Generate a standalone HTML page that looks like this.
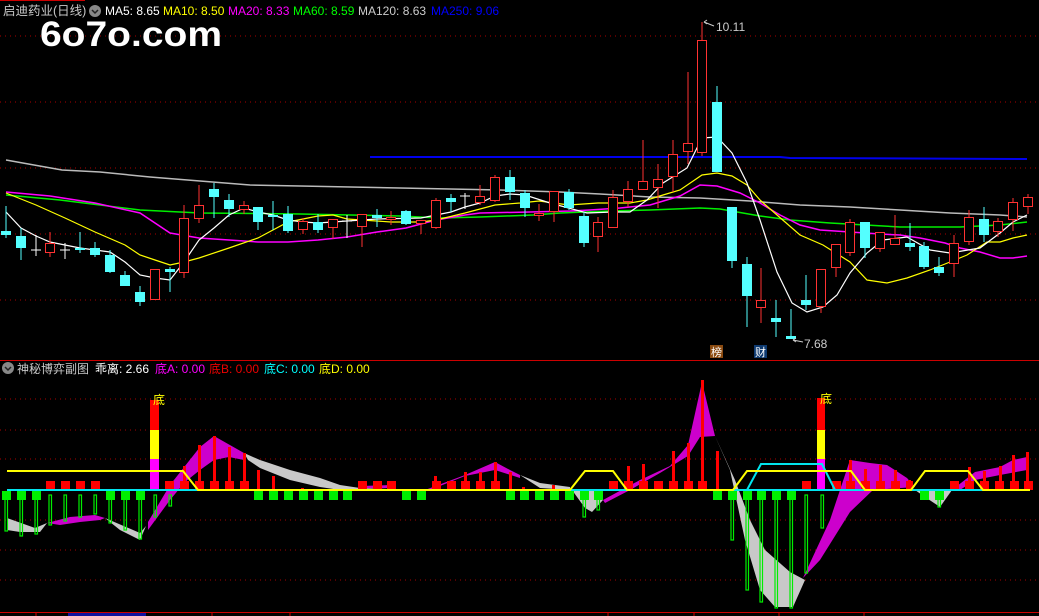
<!DOCTYPE html>
<html><head><meta charset="utf-8"><style>
html,body{margin:0;padding:0;background:#000;width:1039px;height:616px;overflow:hidden}
svg{display:block}
text{font-family:"Liberation Sans","Noto Sans CJK SC",sans-serif}
</style></head><body>
<svg width="1039" height="616" viewBox="0 0 1039 616" xmlns="http://www.w3.org/2000/svg">
<rect width="1039" height="616" fill="#000"/>
<line x1="0" y1="0.5" x2="85" y2="0.5" stroke="#c00" stroke-width="1"/>
<!-- top grid -->
<g stroke="#a00" stroke-dasharray="1,4" stroke-width="1">
<line x1="0" y1="36" x2="1039" y2="36"/><line x1="0" y1="102" x2="1039" y2="102"/>
<line x1="0" y1="168" x2="1039" y2="168"/><line x1="0" y1="234" x2="1039" y2="234"/>
<line x1="0" y1="300" x2="1039" y2="300"/>
<line x1="0" y1="399" x2="1039" y2="399"/><line x1="0" y1="430" x2="1039" y2="430"/>
<line x1="0" y1="459" x2="1039" y2="459"/><line x1="0" y1="520" x2="1039" y2="520"/>
<line x1="0" y1="550" x2="1039" y2="550"/><line x1="0" y1="580" x2="1039" y2="580"/>
</g>
<!-- header -->
<text x="3" y="15" font-size="12.5" fill="#c8c8c8">启迪药业(日线)</text>
<circle cx="95" cy="11" r="6" fill="#888"/><path d="M92 10 L95 13 L98 10" stroke="#222" stroke-width="1.5" fill="none"/>
<text x="105" y="15" font-size="12" fill="#fff">MA5: 8.65</text>
<text x="163" y="15" font-size="12" fill="#ff0">MA10: 8.50</text>
<text x="228" y="15" font-size="12" fill="#f0f">MA20: 8.33</text>
<text x="293" y="15" font-size="12" fill="#0f0">MA60: 8.59</text>
<text x="358" y="15" font-size="12" fill="#ccc">MA120: 8.63</text>
<text x="431" y="15" font-size="12" fill="#00f">MA250: 9.06</text>
<text x="40" y="46" font-size="35" font-weight="bold" fill="#fff" textLength="182" lengthAdjust="spacingAndGlyphs">6o7o.com</text>

<!-- MA lines -->
<polyline fill="none" stroke="#0000ee" stroke-width="2" points="370,157 780,157 790,158 1027,159"/>
<polyline fill="none" stroke="#bbb" stroke-width="1.5" points="6,160 62,170 100,172 150,177 200,181 250,185 300,186 400,188 500,190 560,192 600,194 650,197 700,198 750,201 800,205 850,207 900,210 950,213 1000,215 1027,217"/>
<polyline fill="none" stroke="#00ee00" stroke-width="1.5" points="6,195 60,200 140,210 200,213 300,214 400,216 440,218 480,217 533,215 560,213 610,211 650,210 700,208 720,209 760,216 790,220 830,223 900,227 960,227 1000,225 1027,222"/>
<polyline fill="none" stroke="#f0f" stroke-width="1.5" points="6,192 50,196 95,203 140,213 170,233 199,238 229,240 258,242 288,242 318,240 347,237 377,232 406,228 436,220 465,215 480,213 530,212 570,211 590,210 620,208 650,205 680,196 700,185 717,186 740,193 760,203 780,215 800,225 820,230 850,232 880,234 900,235 920,238 945,243 960,248 980,252 1000,258 1013,258 1027,256"/>
<polyline fill="none" stroke="#ff0" stroke-width="1.2" points="6,193 36,205 65,218 95,232 125,245 140,255 155,260 170,265 184,262 199,258 229,248 258,238 288,222 318,216 333,215 347,219 391,222 421,222 436,220 465,213 495,205 520,203 539,201 569,205 598,203 630,203 647,200 663,195 680,190 702,175 717,173 732,176 747,185 760,200 777,215 800,235 823,245 850,262 867,280 887,283 907,278 930,270 950,262 967,255 987,242 1000,242 1013,238 1027,235"/>
<polyline fill="none" stroke="#fff" stroke-width="1.2" points="6,212 21,228 36,236 50,242 65,245 80,248 95,250 110,252 125,262 140,275 155,278 170,280 184,262 199,240 214,228 229,215 244,208 258,212 273,215 288,220 303,222 318,223 347,221 377,219 421,218 436,215 451,212 465,207 480,203 495,196 510,194 525,195 550,203 587,213 613,212 630,212 647,200 663,183 687,168 702,138 717,137 732,153 747,183 760,220 777,272 792,303 807,312 823,307 837,295 850,273 867,253 883,240 907,237 930,250 950,253 980,248 1000,233 1013,222 1027,215"/>

<!-- candles: wicks -->
<g stroke-width="1">
<g stroke="#54ffff">
<line x1="6" y1="206" x2="6" y2="238"/><line x1="21" y1="228" x2="21" y2="260"/><line x1="80" y1="232" x2="80" y2="253"/><line x1="95" y1="242" x2="95" y2="257"/><line x1="110" y1="250" x2="110" y2="273"/><line x1="125" y1="271" x2="125" y2="286"/><line x1="140" y1="286" x2="140" y2="306"/><line x1="170" y1="267" x2="170" y2="292"/><line x1="214" y1="183" x2="214" y2="218"/><line x1="229" y1="194" x2="229" y2="217"/><line x1="258" y1="207" x2="258" y2="230"/><line x1="273" y1="201" x2="273" y2="230"/><line x1="288" y1="206" x2="288" y2="233"/><line x1="318" y1="214" x2="318" y2="233"/><line x1="377" y1="209" x2="377" y2="227"/><line x1="406" y1="210" x2="406" y2="225"/><line x1="451" y1="194" x2="451" y2="212"/><line x1="510" y1="170" x2="510" y2="200"/><line x1="525" y1="190" x2="525" y2="217"/><line x1="569" y1="189" x2="569" y2="210"/><line x1="584" y1="212" x2="584" y2="247"/><line x1="717" y1="86" x2="717" y2="172"/><line x1="732" y1="207" x2="732" y2="268"/><line x1="747" y1="257" x2="747" y2="327"/><line x1="776" y1="300" x2="776" y2="337"/><line x1="791" y1="309" x2="791" y2="338"/><line x1="806" y1="275" x2="806" y2="310"/><line x1="865" y1="222" x2="865" y2="258"/><line x1="910" y1="223" x2="910" y2="251"/><line x1="924" y1="242" x2="924" y2="269"/><line x1="939" y1="257" x2="939" y2="276"/><line x1="984" y1="207" x2="984" y2="242"/>
</g>
<g stroke="#ff3232">
<line x1="50" y1="232" x2="50" y2="257"/><line x1="155" y1="269" x2="155" y2="300"/><line x1="184" y1="205" x2="184" y2="278"/><line x1="199" y1="185" x2="199" y2="223"/><line x1="244" y1="201" x2="244" y2="214"/><line x1="303" y1="218" x2="303" y2="234"/><line x1="333" y1="219" x2="333" y2="239"/><line x1="362" y1="214" x2="362" y2="247"/><line x1="391" y1="211" x2="391" y2="225"/><line x1="421" y1="220" x2="421" y2="234"/><line x1="436" y1="198" x2="436" y2="229"/><line x1="480" y1="185" x2="480" y2="205"/><line x1="495" y1="175" x2="495" y2="202"/><line x1="539" y1="204" x2="539" y2="221"/><line x1="554" y1="191" x2="554" y2="222"/><line x1="598" y1="217" x2="598" y2="252"/><line x1="613" y1="190" x2="613" y2="227"/><line x1="628" y1="181" x2="628" y2="207"/><line x1="643" y1="140" x2="643" y2="190"/><line x1="658" y1="164" x2="658" y2="208"/><line x1="673" y1="140" x2="673" y2="192"/><line x1="688" y1="72" x2="688" y2="164"/><line x1="702" y1="22" x2="702" y2="156"/><line x1="761" y1="268" x2="761" y2="323"/><line x1="821" y1="269" x2="821" y2="313"/><line x1="836" y1="244" x2="836" y2="277"/><line x1="850" y1="219" x2="850" y2="256"/><line x1="880" y1="232" x2="880" y2="252"/><line x1="895" y1="215" x2="895" y2="244"/><line x1="954" y1="235" x2="954" y2="277"/><line x1="969" y1="210" x2="969" y2="245"/><line x1="998" y1="218" x2="998" y2="237"/><line x1="1013" y1="198" x2="1013" y2="231"/><line x1="1028" y1="194" x2="1028" y2="214"/>
</g>
<g stroke="#fff">
<line x1="36" y1="235" x2="36" y2="256"/><line x1="31" y1="250" x2="41" y2="250"/>
<line x1="65" y1="243" x2="65" y2="259"/><line x1="60" y1="250" x2="70" y2="250"/>
<line x1="347" y1="215" x2="347" y2="238"/><line x1="342" y1="221" x2="352" y2="221"/>
<line x1="465" y1="193" x2="465" y2="209"/><line x1="460" y1="196" x2="470" y2="196"/>
</g>
</g>
<!-- cyan bodies -->
<g fill="#54ffff">
<rect x="1" y="231" width="10" height="4"/><rect x="16" y="236" width="10" height="12"/><rect x="75" y="248" width="10" height="2"/><rect x="90" y="248" width="10" height="7"/><rect x="105" y="255" width="10" height="17"/><rect x="120" y="275" width="10" height="11"/><rect x="135" y="292" width="10" height="10"/><rect x="165" y="269" width="10" height="3"/><rect x="209" y="189" width="10" height="8"/><rect x="224" y="200" width="10" height="9"/><rect x="253" y="207" width="10" height="15"/><rect x="268" y="215" width="10" height="2"/><rect x="283" y="214" width="10" height="17"/><rect x="313" y="222" width="10" height="8"/><rect x="372" y="215" width="10" height="3"/><rect x="401" y="211" width="10" height="13"/><rect x="446" y="198" width="10" height="4"/><rect x="505" y="177" width="10" height="15"/><rect x="520" y="193" width="10" height="15"/><rect x="564" y="192" width="10" height="16"/><rect x="579" y="216" width="10" height="27"/><rect x="712" y="102" width="10" height="70"/><rect x="727" y="207" width="10" height="54"/><rect x="742" y="264" width="10" height="32"/><rect x="771" y="318" width="10" height="4"/><rect x="786" y="336" width="10" height="3"/><rect x="801" y="300" width="10" height="5"/><rect x="860" y="222" width="10" height="26"/><rect x="905" y="243" width="10" height="4"/><rect x="919" y="246" width="10" height="21"/><rect x="934" y="267" width="10" height="6"/><rect x="979" y="219" width="10" height="16"/>
</g>
<!-- red bodies -->
<g fill="#000" stroke="#ff3232" stroke-width="1">
<rect x="45.5" y="243.5" width="9" height="9"/><rect x="150.5" y="269.5" width="9" height="30"/><rect x="179.5" y="218.5" width="9" height="54"/><rect x="194.5" y="205.5" width="9" height="13"/><rect x="239.5" y="205.5" width="9" height="4"/><rect x="298.5" y="221.5" width="9" height="8"/><rect x="328.5" y="219.5" width="9" height="8"/><rect x="357.5" y="214.5" width="9" height="12"/><rect x="386.5" y="217.5" width="9" height="2"/><rect x="416.5" y="220.5" width="9" height="3"/><rect x="431.5" y="200.5" width="9" height="27"/><rect x="475.5" y="196.5" width="9" height="6"/><rect x="490.5" y="177.5" width="9" height="23"/><rect x="534.5" y="213.5" width="9" height="2"/><rect x="549.5" y="191.5" width="9" height="20"/><rect x="593.5" y="222.5" width="9" height="14"/><rect x="608.5" y="197.5" width="9" height="30"/><rect x="623.5" y="189.5" width="9" height="12"/><rect x="638.5" y="181.5" width="9" height="8"/><rect x="653.5" y="179.5" width="9" height="8"/><rect x="668.5" y="154.5" width="9" height="22"/><rect x="683.5" y="143.5" width="9" height="8"/><rect x="697.5" y="40.5" width="9" height="112"/><rect x="756.5" y="300.5" width="9" height="7"/><rect x="816.5" y="269.5" width="9" height="37"/><rect x="831.5" y="244.5" width="9" height="23"/><rect x="845.5" y="222.5" width="9" height="30"/><rect x="875.5" y="232.5" width="9" height="16"/><rect x="890.5" y="238.5" width="9" height="6"/><rect x="949.5" y="243.5" width="9" height="20"/><rect x="964.5" y="217.5" width="9" height="24"/><rect x="993.5" y="221.5" width="9" height="10"/><rect x="1008.5" y="202.5" width="9" height="17"/><rect x="1023.5" y="197.5" width="9" height="9"/>
</g>
<!-- labels -->
<path d="M704 22 L714 26" stroke="#ccc" fill="none"/><path d="M704 22 l3 -2 M704 22 l3 2" stroke="#ccc"/>
<text x="716" y="31" font-size="12" fill="#ccc">10.11</text>
<path d="M793 340 L803 342" stroke="#ccc"/><path d="M793 340 l3 -2 M793 340 l3 2" stroke="#ccc"/>
<text x="804" y="348" font-size="12" fill="#ccc">7.68</text>
<rect x="710" y="345" width="13" height="13" fill="#8a4a10"/><text x="711" y="356" font-size="11" fill="#fff">榜</text>
<rect x="754" y="345" width="13" height="13" fill="#0e3a70"/><text x="755" y="356" font-size="11" fill="#fff">财</text>

<!-- separator -->
<line x1="0" y1="360.5" x2="1039" y2="360.5" stroke="#c00" stroke-width="1"/>
<circle cx="8" cy="368" r="6" fill="#888"/><path d="M5 367 L8 370 L11 367" stroke="#222" stroke-width="1.5" fill="none"/>
<text x="17" y="373" font-size="12" fill="#c8c8c8">神秘博弈副图</text>
<text x="95" y="373" font-size="12" fill="#fff">乖离: 2.66</text>
<text x="155" y="373" font-size="12" fill="#f0f">底A: 0.00</text>
<text x="209" y="373" font-size="12" fill="#e00">底B: 0.00</text>
<text x="264" y="373" font-size="12" fill="#0ff">底C: 0.00</text>
<text x="319" y="373" font-size="12" fill="#ff0">底D: 0.00</text>

<!-- bands -->
<g fill="#c8c8c8">
<polygon points="7,518 35,528 47,523 40,532 20,532 7,530"/>
<polygon points="105,518 140,533 146,526 140,540 120,530"/>
<polygon points="244,453 260,460 290,470 320,478 340,485 360,488 420,490 380,490 340,490 320,487 290,480 260,468 248,460"/>
<polygon points="520,475 540,483 570,487 570,490 540,488"/>
<polygon points="572,490 603,490 603,500 592,512 585,508"/>
<polygon points="715,436 730,470 745,540 760,590 775,607 793,607 805,580 790,572 765,550 750,520 735,480"/>
<polygon points="915,490 952,490 940,507 925,497"/>
</g>
<g fill="#cc00cc">
<polygon points="47,523 70,517 95,515 105,518 100,520 80,522 60,525"/>
<polygon points="148,522 170,485 185,466 200,447 214,436 244,453 244,460 229,457 214,460 200,470 185,482 170,500 148,530"/>
<polygon points="425,490 465,475 495,462 510,470 520,475 520,478 495,470 465,476 430,490"/>
<polygon points="362,486 391,485 391,488 362,488"/>
<polygon points="603,500 640,480 670,466 688,445 702,382 715,436 700,437 688,456 660,473 630,490 605,503"/>
<polygon points="803,578 830,520 850,460 870,463 887,465 907,478 915,487 873,490 850,512 820,560"/>
<polygon points="952,490 975,472 1000,467 1013,460 1027,457 1027,470 1000,475 975,480 960,490"/>
</g>
<!-- green hollow bars -->
<g fill="none" stroke="#00ee00" stroke-width="1.2">
<rect x="5" y="495" width="2.5" height="36"/><rect x="20" y="495" width="2.5" height="41"/><rect x="35" y="495" width="2.5" height="39"/><rect x="49" y="495" width="2.5" height="30"/><rect x="64" y="495" width="2.5" height="26"/><rect x="79" y="495" width="2.5" height="22"/><rect x="94" y="495" width="2.5" height="19"/><rect x="109" y="495" width="2.5" height="28"/><rect x="124" y="495" width="2.5" height="35"/><rect x="139" y="495" width="2.5" height="44"/><rect x="154" y="495" width="2.5" height="22"/><rect x="169" y="495" width="2.5" height="11"/>
<rect x="583" y="495" width="2.5" height="22"/><rect x="597" y="495" width="2.5" height="15"/><rect x="731" y="495" width="2.5" height="45"/><rect x="746" y="495" width="2.5" height="95"/><rect x="760" y="495" width="2.5" height="107"/><rect x="775" y="495" width="2.5" height="113"/><rect x="790" y="495" width="2.5" height="113"/><rect x="805" y="495" width="2.5" height="78"/><rect x="821" y="495" width="2.5" height="33"/><rect x="938" y="495" width="2.5" height="12"/>
</g>
<!-- red thin bars -->
<g fill="#f00">
<rect x="183" y="466" width="3" height="24"/><rect x="198" y="445" width="3" height="45"/><rect x="213" y="436" width="3" height="54"/><rect x="228" y="447" width="3" height="43"/><rect x="243" y="453" width="3" height="37"/><rect x="257" y="470" width="3" height="20"/><rect x="272" y="476" width="3" height="14"/><rect x="301" y="488" width="3" height="2"/><rect x="434" y="476" width="3" height="14"/><rect x="464" y="472" width="3" height="18"/><rect x="479" y="472" width="3" height="18"/><rect x="494" y="462" width="3" height="28"/><rect x="509" y="472" width="3" height="18"/><rect x="522" y="487" width="3" height="3"/><rect x="552" y="485" width="3" height="5"/><rect x="627" y="466" width="3" height="24"/><rect x="642" y="464" width="3" height="26"/><rect x="672" y="451" width="3" height="39"/><rect x="687" y="443" width="3" height="47"/><rect x="701" y="380" width="3" height="110"/><rect x="716" y="451" width="3" height="39"/><rect x="849" y="460" width="3" height="30"/><rect x="864" y="469" width="3" height="21"/><rect x="879" y="465" width="3" height="25"/><rect x="894" y="470" width="3" height="20"/><rect x="908" y="480" width="3" height="10"/><rect x="968" y="467" width="3" height="23"/><rect x="983" y="471" width="3" height="19"/><rect x="999" y="466" width="3" height="24"/><rect x="1012" y="455" width="3" height="35"/><rect x="1026" y="452" width="3" height="38"/>
</g>
<!-- red squares -->
<g fill="#f00">
<rect x="46" y="481" width="9" height="9"/><rect x="61" y="481" width="9" height="9"/><rect x="76" y="481" width="9" height="9"/><rect x="91" y="481" width="9" height="9"/><rect x="165" y="481" width="9" height="9"/><rect x="180" y="481" width="9" height="9"/><rect x="195" y="481" width="9" height="9"/><rect x="210" y="481" width="9" height="9"/><rect x="225" y="481" width="9" height="9"/><rect x="240" y="481" width="9" height="9"/><rect x="358" y="481" width="9" height="9"/><rect x="373" y="481" width="9" height="9"/><rect x="387" y="481" width="9" height="9"/><rect x="432" y="481" width="9" height="9"/><rect x="447" y="481" width="9" height="9"/><rect x="461" y="481" width="9" height="9"/><rect x="476" y="481" width="9" height="9"/><rect x="491" y="481" width="9" height="9"/>
<rect x="609" y="481" width="9" height="9"/><rect x="624" y="481" width="9" height="9"/><rect x="639" y="481" width="9" height="9"/><rect x="654" y="481" width="9" height="9"/><rect x="669" y="481" width="9" height="9"/><rect x="684" y="481" width="9" height="9"/><rect x="698" y="481" width="9" height="9"/><rect x="802" y="481" width="9" height="9"/><rect x="832" y="481" width="9" height="9"/><rect x="846" y="481" width="9" height="9"/><rect x="861" y="481" width="9" height="9"/><rect x="876" y="481" width="9" height="9"/><rect x="891" y="481" width="9" height="9"/><rect x="906" y="481" width="7" height="9"/><rect x="950" y="481" width="9" height="9"/><rect x="965" y="481" width="9" height="9"/><rect x="980" y="481" width="9" height="9"/><rect x="995" y="481" width="9" height="9"/><rect x="1010" y="481" width="9" height="9"/><rect x="1024" y="481" width="9" height="9"/>
</g>
<!-- big spike bars -->
<rect x="150" y="400" width="9" height="30" fill="#f00"/><rect x="150" y="430" width="9" height="29" fill="#ff0"/><rect x="150" y="459" width="9" height="31" fill="#f0f"/>
<text x="153" y="404" font-size="12" fill="#ff0">底</text>
<rect x="817" y="398" width="8" height="32" fill="#f00"/><rect x="817" y="430" width="8" height="29" fill="#ff0"/><rect x="817" y="459" width="8" height="31" fill="#f0f"/>
<text x="820" y="403" font-size="12" fill="#ff0">底</text>
<!-- baseline & step lines -->
<line x1="7" y1="490" x2="1030" y2="490" stroke="#00e5ee" stroke-width="2"/>
<polyline fill="none" stroke="#00e5ee" stroke-width="2" points="747,490 761,464 822,464 835,490"/>
<g fill="none" stroke="#ff0" stroke-width="2">
<polyline points="7,471 183,471 198,490 570,490 585,471 613,471 627,490 733,490 747,471 851,471 865,490 911,490 925,471 968,471 983,490 1030,490"/>
</g>
<!-- green squares -->
<g fill="#00ee00">
<rect x="2" y="491" width="9" height="9"/><rect x="17" y="491" width="9" height="9"/><rect x="32" y="491" width="9" height="9"/><rect x="106" y="491" width="9" height="9"/><rect x="121" y="491" width="9" height="9"/><rect x="136" y="491" width="9" height="9"/><rect x="254" y="491" width="9" height="9"/><rect x="269" y="491" width="9" height="9"/><rect x="284" y="491" width="9" height="9"/><rect x="299" y="491" width="9" height="9"/><rect x="314" y="491" width="9" height="9"/><rect x="329" y="491" width="9" height="9"/><rect x="343" y="491" width="9" height="9"/><rect x="402" y="491" width="9" height="9"/><rect x="417" y="491" width="9" height="9"/><rect x="506" y="491" width="9" height="9"/>
<rect x="520" y="491" width="9" height="9"/><rect x="535" y="491" width="9" height="9"/><rect x="550" y="491" width="9" height="9"/><rect x="565" y="491" width="9" height="9"/><rect x="580" y="491" width="9" height="9"/><rect x="594" y="491" width="9" height="9"/><rect x="713" y="491" width="9" height="9"/><rect x="728" y="491" width="9" height="9"/><rect x="743" y="491" width="9" height="9"/><rect x="757" y="491" width="9" height="9"/><rect x="772" y="491" width="9" height="9"/><rect x="787" y="491" width="9" height="9"/><rect x="920" y="491" width="9" height="9"/><rect x="935" y="491" width="9" height="9"/>
</g>
<!-- bottom axis -->
<line x1="0" y1="612.5" x2="1039" y2="612.5" stroke="#c00" stroke-width="1"/>
<rect x="68" y="613" width="78" height="3" fill="#1010a0"/>
<g stroke="#c00"><line x1="36" y1="612" x2="36" y2="616"/><line x1="212" y1="612" x2="212" y2="616"/><line x1="290" y1="612" x2="290" y2="616"/><line x1="608" y1="612" x2="608" y2="616"/><line x1="694" y1="612" x2="694" y2="616"/><line x1="779" y1="612" x2="779" y2="616"/><line x1="864" y1="612" x2="864" y2="616"/></g>
</svg>
</body></html>
